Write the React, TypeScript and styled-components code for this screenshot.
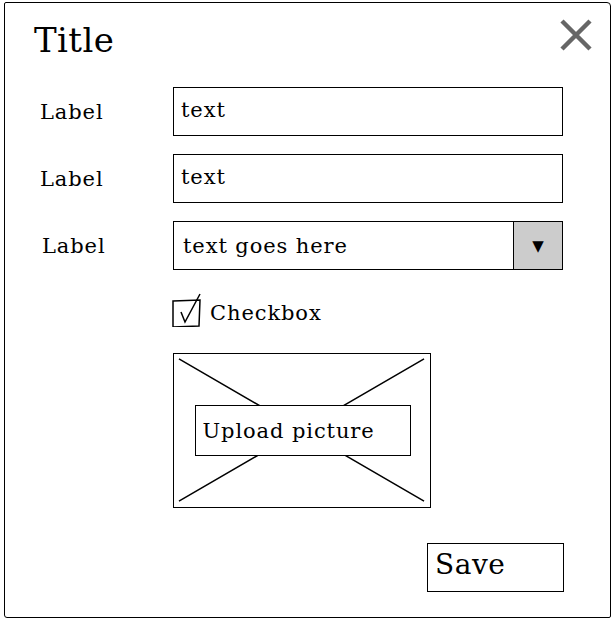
import React from "react";
import styled, { createGlobalStyle } from "styled-components";

const Global = createGlobalStyle`
  html, body { margin: 0; padding: 0; background: #fff; }
  body { font-family: "DejaVu Serif", serif; color: #000; }
`;

const Frame = styled.div`
  box-sizing: border-box;
  width: 607px;
  height: 616px;
  margin: 2px 0 0 4px;
  border: 1.5px solid #000;
  border-radius: 2px 4px 2px 3px;
  padding: 0 0 0 35px;
  display: flex;
  flex-direction: column;
`;

const Header = styled.div`
  display: flex;
  justify-content: space-between;
  align-items: flex-start;
  height: 84px;
  padding-top: 13px;
  box-sizing: border-box;
  padding-right: 16px;
  margin-left: -6px;
`;

const Title = styled.h1`
  margin: 0;
  font-weight: normal;
  font-size: 34px;
  letter-spacing: 0.4px;
  line-height: 48px;
`;

const Close = styled.svg`
  width: 34px;
  height: 34px;
  margin-top: 2px;
  margin-right: 1px;
`;

const Form = styled.div`
  display: grid;
  grid-template-columns: 133px 390px;
  row-gap: 18px;
  align-items: center;
`;

const Label = styled.div<{ $dx?: number }>`
  font-size: 21px;
  letter-spacing: 0.9px;
  margin-left: ${(p) => p.$dx ?? 0}px;
`;

const Input = styled.div`
  box-sizing: border-box;
  height: 49px;
  border: 1.5px solid #000;
  padding: 0 0 4px 7px;
  display: flex;
  align-items: center;
  font-size: 21px;
  letter-spacing: 0.9px;
`;

const Select = styled.div`
  box-sizing: border-box;
  height: 49px;
  border: 1.5px solid #000;
  display: flex;
  font-size: 21px;
  letter-spacing: 0.9px;
`;

const SelectText = styled.div`
  flex: 1;
  display: flex;
  align-items: center;
  padding-left: 9px;
`;

const SelectButton = styled.div`
  width: 48px;
  border-left: 1.5px solid #000;
  background: #cccccc;
  display: flex;
  align-items: center;
  justify-content: center;
  font-size: 15px;
  letter-spacing: 0;
`;

const Spacer = styled.div``;

const CheckRow = styled.div`
  display: flex;
  align-items: center;
  gap: 8px;
  font-size: 21px;
  letter-spacing: 0.9px;
  margin-top: 5px;
`;

const CheckText = styled.span`
  margin-top: 5px;
`;

const CheckIcon = styled.svg`
  width: 30px;
  height: 34px;
  margin-left: -1px;
`;

const Picture = styled.div`
  grid-column: 2;
  position: relative;
  box-sizing: border-box;
  width: 258px;
  height: 155px;
  border: 1.5px solid #000;
  display: flex;
  align-items: center;
  justify-content: center;
  margin-top: 8px;
`;

const Cross = styled.svg`
  position: absolute;
  inset: 0;
  width: 100%;
  height: 100%;
`;

const UploadButton = styled.div`
  position: relative;
  box-sizing: border-box;
  width: 216px;
  height: 51px;
  border: 1.5px solid #000;
  background: #fff;
  display: flex;
  align-items: center;
  padding-left: 7px;
  font-size: 21px;
  letter-spacing: 0.9px;
  margin-left: 1px;
`;

const Footer = styled.div`
  display: flex;
  justify-content: flex-end;
  padding-right: 46px;
  margin-top: 35px;
`;

const SaveButton = styled.div`
  box-sizing: border-box;
  width: 137px;
  height: 49px;
  border: 1.5px solid #000;
  padding: 0 0 6px 7px;
  display: flex;
  align-items: center;
  font-size: 28px;
  letter-spacing: 0.5px;
`;

export default function App() {
  return (
    <>
      <Global />
      <Frame>
        <Header>
          <Title>Title</Title>
          <Close viewBox="0 0 34 34">
            <path d="M3 3 L31 31 M31 3 L3 31" stroke="#666" strokeWidth="4.5" fill="none" />
          </Close>
        </Header>
        <Form>
          <Label>Label</Label>
          <Input>text</Input>
          <Label>Label</Label>
          <Input>text</Input>
          <Label $dx={2}>Label</Label>
          <Select>
            <SelectText>text goes here</SelectText>
            <SelectButton>▼</SelectButton>
          </Select>
          <Spacer />
          <CheckRow>
            <CheckIcon viewBox="0 0 30 34">
              <path d="M1 8 L28 7 L27 33 L1 34 Z" stroke="#000" strokeWidth="1.5" fill="none" />
              <path d="M9 19 L13 29 L28 1" stroke="#000" strokeWidth="1.5" fill="none" />
            </CheckIcon>
            <CheckText>Checkbox</CheckText>
          </CheckRow>
          <Picture>
            <Cross viewBox="0 0 258 155" preserveAspectRatio="none">
              <path d="M5 5 L252 149 M252 5 L5 149" stroke="#000" strokeWidth="1.5" fill="none" />
            </Cross>
            <UploadButton>Upload picture</UploadButton>
          </Picture>
        </Form>
        <Footer>
          <SaveButton>Save</SaveButton>
        </Footer>
      </Frame>
    </>
  );
}
